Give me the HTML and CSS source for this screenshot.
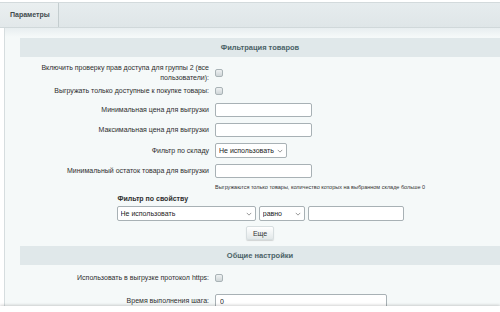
FILE: index.html
```html
<!DOCTYPE html>
<html>
<head>
    <title>Параметры</title>
    <link rel="stylesheet" href="styles.css">
</head>
<body>
    <div class="tabs">
        <div class="tab active">Параметры</div>
    </div>
    <div class="panel">
        <div class="section-title">Фильтрация товаров</div>

        <div class="row row-first">
            <label class="row-label" for="checkRights">Включить проверку прав доступа для группы 2 (все пользователи):</label>
            <div class="row-field"><input type="checkbox" id="checkRights" class="check"></div>
        </div>
        <div class="row">
            <label class="row-label" for="onlyAvailable">Выгружать только доступные к покупке товары:</label>
            <div class="row-field"><input type="checkbox" id="onlyAvailable" class="check"></div>
        </div>
        <div class="row row-input">
            <label class="row-label" for="minPrice">Минимальная цена для выгрузки</label>
            <div class="row-field"><input type="text" id="minPrice" class="text"></div>
        </div>
        <div class="row row-input">
            <label class="row-label" for="maxPrice">Максимальная цена для выгрузки</label>
            <div class="row-field"><input type="text" id="maxPrice" class="text"></div>
        </div>
        <div class="row row-input">
            <label class="row-label" for="store">Фильтр по складу</label>
            <div class="row-field">
                <div class="select-wrap store">
                    <select id="store"><option>Не использовать</option></select>
                    <svg class="chevron" viewBox="0 0 8 5" width="6" height="4"><path d="M1 1 L4 4 L7 1" fill="none" stroke="#777" stroke-width="1"/></svg>
                </div>
            </div>
        </div>
        <div class="row row-input">
            <label class="row-label" for="minStock">Минимальный остаток товара для выгрузки</label>
            <div class="row-field"><input type="text" id="minStock" class="text"></div>
        </div>
        <div class="row row-note">
            <div></div>
            <div class="note">Выгружаются только товары, количество которых на выбранном складе больше 0</div>
        </div>

        <div class="prop-filter">
            <div class="prop-title">Фильтр по свойству</div>
            <div class="prop-line">
                <div class="select-wrap prop">
                    <select><option>Не использовать</option></select>
                    <svg class="chevron" viewBox="0 0 8 5" width="6" height="4"><path d="M1 1 L4 4 L7 1" fill="none" stroke="#777" stroke-width="1"/></svg>
                </div>
                <div class="select-wrap cond">
                    <select><option>равно</option></select>
                    <svg class="chevron" viewBox="0 0 8 5" width="6" height="4"><path d="M1 1 L4 4 L7 1" fill="none" stroke="#777" stroke-width="1"/></svg>
                </div>
                <input type="text" class="text prop-value">
            </div>
            <button type="button" class="btn">Еще</button>
        </div>

        <div class="section-title">Общие настройки</div>

        <div class="row row-https">
            <label class="row-label" for="https">Использовать в выгрузке протокол https:</label>
            <div class="row-field"><input type="checkbox" id="https" class="check"></div>
        </div>
        <div class="row row-time">
            <label class="row-label" for="stepTime">Время выполнения шага:</label>
            <div class="row-field"><input type="text" id="stepTime" class="text wide" value="0"></div>
        </div>
    </div>
    <div class="footer"></div>
</body>
</html>
```

FILE: styles.css
```css
body {
    margin: 0;
    background: #ffffff;
    font-family: "Liberation Sans", Arial, sans-serif;
    font-size: 7px;
    color: #2e2e2e;
    overflow: hidden;
    height: 312px;
    position: relative;
}
.tabs {
    margin-top: 2px;
    height: 24px;
    border-top: 1px solid #d3dadc;
    border-bottom: 1px solid #d0d8da;
    background: linear-gradient(#e6ecee, #dfe6e8);
    display: flex;
}
.tab {
    width: 48px;
    padding-left: 10px;
    line-height: 24px;
    font-weight: bold;
    color: #3f4a4d;
    border-right: 1px solid #c4cdcf;
    background: linear-gradient(#eaeff0, #e2e8ea);
}
.panel {
    margin-left: 4px;
    border-left: 1px solid #d6dddf;
    background: linear-gradient(#e8eef0 0, #f5f9f9 9px);
    padding: 10px 0 0 15px;
    height: 270px;
}
.section-title {
    height: 19px;
    line-height: 19px;
    background: #e0e8ea;
    text-align: center;
    font-weight: bold;
    font-size: 7.5px;
    color: #4b6267;
}
.row {
    display: grid;
    grid-template-columns: 189px 1fr;
    column-gap: 6px;
    align-items: center;
    margin-top: 2px;
}
.row-first {
    margin-top: 6px;
}
.row-input {
    margin-top: 6px;
}
.row-note {
    margin-top: 4px;
}
.row-https {
    margin-top: 7px;
}
.row-time {
    margin-top: 10px;
}
.row-label {
    text-align: right;
    padding-left: 18px;
    line-height: 10px;
}
.row-field {
    display: flex;
    align-items: center;
    min-height: 12px;
}
.check {
    appearance: none;
    margin: 0;
    width: 8px;
    height: 8px;
    border: 1px solid #a9b3b6;
    border-radius: 2px;
    background: linear-gradient(#eef1f2, #cfd6d8);
}
.text {
    box-sizing: border-box;
    width: 97px;
    height: 14px;
    margin: 0;
    padding: 0 4px;
    border: 1px solid #a8b1b5;
    border-radius: 2px;
    background: #ffffff;
    font-family: inherit;
    font-size: 7px;
    color: #222;
}
.text.wide {
    width: 172px;
}
.select-wrap {
    position: relative;
    box-sizing: border-box;
    height: 15px;
}
.select-wrap select {
    appearance: none;
    box-sizing: border-box;
    width: 100%;
    height: 100%;
    margin: 0;
    padding: 0 3px;
    border: 1px solid #a8b1b5;
    border-radius: 2px;
    background: #ffffff;
    font-family: inherit;
    font-size: 7px;
    color: #222;
}
.chevron {
    position: absolute;
    right: 4px;
    top: 6px;
}
.store {
    width: 72px;
}
.note {
    font-size: 5.5px;
    line-height: 10px;
    color: #333;
}
.prop-filter {
    width: 287px;
    margin: 2px auto 0;
}
.prop-title {
    font-weight: bold;
    font-size: 7px;
    line-height: 10px;
    padding-left: 1px;
}
.prop-line {
    display: flex;
    gap: 3px;
    margin-top: 2px;
}
.prop {
    width: 140px;
}
.cond {
    width: 46px;
}
.prop-value {
    width: 96px;
    height: 15px;
}
.btn {
    display: block;
    margin: 5px auto 0;
    width: 28px;
    height: 14px;
    padding: 0;
    border: 1px solid #d7dee0;
    border-radius: 2px;
    background: linear-gradient(#ffffff, #e2e8e9);
    box-shadow: 0 1px 1px rgba(0, 0, 0, 0.15);
    font-family: inherit;
    font-size: 7px;
    color: #333;
}
.prop-filter + .section-title {
    margin-top: 6px;
}
.footer {
    position: absolute;
    left: 0;
    right: 0;
    bottom: 0;
    height: 6px;
    background: #ffffff;
    box-shadow: 0 -1px 3px rgba(0, 0, 0, 0.18);
}
```
